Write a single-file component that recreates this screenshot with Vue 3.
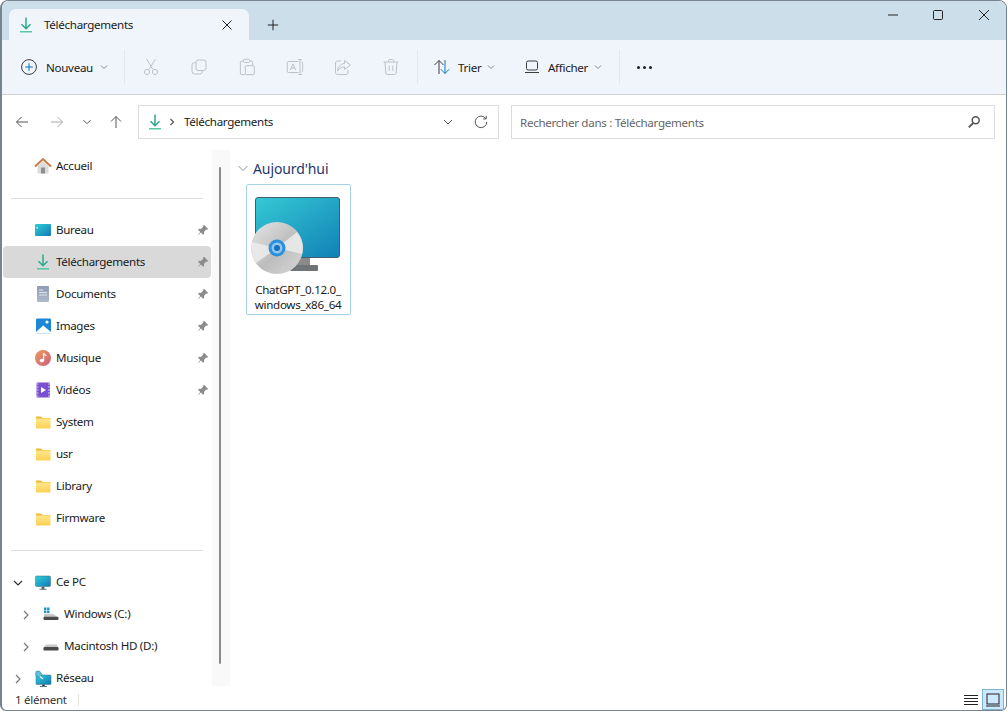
<script setup>
const pinned = [
  { name: 'Bureau', icon: 'i-desk', pin: true },
  { name: 'Téléchargements', icon: 'i-dl', pin: true, selected: true },
  { name: 'Documents', icon: 'i-doc', pin: true },
  { name: 'Images', icon: 'i-img', pin: true },
  { name: 'Musique', icon: 'i-music', pin: true },
  { name: 'Vidéos', icon: 'i-video', pin: true },
  { name: 'System', icon: 'i-folder' },
  { name: 'usr', icon: 'i-folder' },
  { name: 'Library', icon: 'i-folder' },
  { name: 'Firmware', icon: 'i-folder' },
]
const disabledTools = ['t-cut', 't-copy', 't-paste', 't-rename', 't-share', 't-trash']
</script>

<template>
  <div class="window">
    <svg class="defs" aria-hidden="true">
      <defs>
        <linearGradient id="g-screen" x1="0" y1="0" x2="1" y2="1">
          <stop offset="0" stop-color="#2fd0d8" />
          <stop offset="1" stop-color="#1178b4" />
        </linearGradient>
        <linearGradient id="g-big" x1="0" y1="0" x2="0.9" y2="1">
          <stop offset="0" stop-color="#35c9d4" />
          <stop offset="1" stop-color="#1384b8" />
        </linearGradient>
        <linearGradient id="g-folder" x1="0" y1="0" x2="0" y2="1">
          <stop offset="0" stop-color="#ffe88a" />
          <stop offset="1" stop-color="#fbcf52" />
        </linearGradient>
        <linearGradient id="g-music" x1="0" y1="0" x2="1" y2="1">
          <stop offset="0" stop-color="#ee9a5c" />
          <stop offset="1" stop-color="#c9607f" />
        </linearGradient>
        <linearGradient id="g-doc" x1="0" y1="0" x2="0" y2="1">
          <stop offset="0" stop-color="#8e9db5" />
          <stop offset="1" stop-color="#aebacb" />
        </linearGradient>
        <linearGradient id="g-disc" x1="0" y1="0" x2="1" y2="1">
          <stop offset="0" stop-color="#e6e6e6" />
          <stop offset="0.55" stop-color="#bdbdbd" />
          <stop offset="1" stop-color="#d8d8d8" />
        </linearGradient>
      </defs>
      <symbol id="i-dl" viewBox="0 0 18 18">
        <path d="M9 1.5V12.5M4.5 8.2 9 12.7l4.5-4.5" fill="none" stroke="#2ba88c" stroke-width="1.5" />
        <path d="M3 15.8h12" stroke="#58c9a6" stroke-width="1.6" />
      </symbol>
      <symbol id="i-desk" viewBox="0 0 18 18">
        <rect x="1" y="3" width="16" height="12" rx="1" fill="url(#g-screen)" />
        <rect x="2.5" y="6" width="1.5" height="1.5" fill="#d6f6fa" />
      </symbol>
      <symbol id="i-doc" viewBox="0 0 18 18">
        <rect x="3" y="1" width="12" height="16" rx="1" fill="url(#g-doc)" />
        <path d="M5 5h4M5 7.5h8M5 10h8" stroke="#e8edf3" stroke-width="0.9" />
      </symbol>
      <symbol id="i-img" viewBox="0 0 18 18">
        <rect x="2" y="1.5" width="15" height="15" rx="1.2" fill="#1b87d6" />
        <circle cx="13" cy="5" r="1.6" fill="#fff" />
        <path d="M2 15 9.2 8.5 17 15v1.5H2z" fill="#fff" />
      </symbol>
      <symbol id="i-music" viewBox="0 0 18 18">
        <circle cx="9" cy="9" r="8" fill="url(#g-music)" />
        <path d="M9.6 4v7" stroke="#fff" stroke-width="1.3" />
        <path d="M9.6 4.2c1 1.6 2.4 1.4 2.8 3" fill="none" stroke="#fff" stroke-width="1.1" />
        <ellipse cx="7.9" cy="11.6" rx="2.2" ry="1.8" fill="#fff" />
      </symbol>
      <symbol id="i-video" viewBox="0 0 18 18">
        <rect x="2.5" y="1.5" width="13.5" height="15" rx="1" fill="#7a4fd0" />
        <path d="M2.5 3h2M2.5 6h2M2.5 9h2M2.5 12h2M2.5 15h2M14 3h2M14 6h2M14 9h2M14 12h2M14 15h2" stroke="#d9c9f5" stroke-width="1" />
        <path d="M7 6 12 9 7 12z" fill="#fff" />
      </symbol>
      <symbol id="i-folder" viewBox="0 0 18 18">
        <path d="M2 3.5h5l1.6 1.6H16.5V7H2z" fill="#f0b93c" />
        <rect x="2" y="5.6" width="14.5" height="10" rx="0.8" fill="url(#g-folder)" />
      </symbol>
      <symbol id="i-home" viewBox="0 0 18 18">
        <path d="M3.5 9V16.5H14.5V9L9 4z" fill="#dcdcdc" />
        <rect x="7" y="10.5" width="4" height="6" fill="#8f8f8f" />
        <path d="M1 9.5 9 2l8 7.5" fill="none" stroke="#c97b45" stroke-width="2" />
      </symbol>
      <symbol id="i-pc" viewBox="0 0 18 18">
        <rect x="1.5" y="2" width="15" height="10.5" rx="1" fill="url(#g-screen)" stroke="#3a6a80" stroke-width="0.5" />
        <path d="M8 13h2v1.8H8zM5.5 15.3h7" stroke="#5f7380" stroke-width="1" />
      </symbol>
      <symbol id="i-winhd" viewBox="0 0 18 18">
        <path d="M2 1.5h2.4v2.4H2zM5.1 1.5h2.4v2.4H5.1zM2 4.6h2.4V7H2zM5.1 4.6h2.4V7H5.1z" fill="#1e93c4" />
        <path d="M2 7.8h9l4 3v1H2z" fill="#c8c8c8" />
        <rect x="1.5" y="10.8" width="15" height="3.2" rx="1" fill="#4a4a4a" />
      </symbol>
      <symbol id="i-hd" viewBox="0 0 18 18">
        <path d="M4 6.5h10.5l2 3h-15z" fill="#c8c8c8" />
        <rect x="1.5" y="9" width="15" height="3.6" rx="1.2" fill="#4a4a4a" />
      </symbol>
      <symbol id="i-net" viewBox="0 0 18 18">
        <rect x="2" y="5" width="15" height="9.5" rx="1" fill="url(#g-screen)" stroke="#3a6a80" stroke-width="0.5" />
        <path d="M8.5 14.8h2v1.4h-2zM6 16.5h7" stroke="#5f7380" stroke-width="1" />
        <path d="M2 1.5 5.5 1l2.5 3.5-3 3L1.5 5z" fill="#5fc0d8" stroke="#2f7f9e" stroke-width="0.6" />
        <path d="M6 6.5 9 9" stroke="#e8f4f8" stroke-width="1.1" />
      </symbol>
      <symbol id="i-pin" viewBox="0 0 12 12">
        <path d="M7 .8 11.2 5l-1 .8-1-.2-2.3 2.3.2 2-.9.9-2.3-2.4L1.2 11 1 10.8l2.3-2.8-2.3-2.3.9-.9 2 .2L6.2 2.8 6 1.8z" fill="#8b8b8b" />
      </symbol>
      <symbol id="t-cut" viewBox="0 0 18 18">
        <path d="M4.5 1 11 11.5M13.5 1 7 11.5" />
        <circle cx="5" cy="14" r="2.6" />
        <circle cx="13" cy="14" r="2.6" />
      </symbol>
      <symbol id="t-copy" viewBox="0 0 18 18">
        <rect x="6" y="2" width="10" height="10.5" rx="2.2" />
        <path d="M6 4.8H4.2A2.2 2.2 0 0 0 2 7v6.3a2.7 2.7 0 0 0 2.7 2.7H10a2.2 2.2 0 0 0 2.2-2v-1.5" />
      </symbol>
      <symbol id="t-paste" viewBox="0 0 18 18">
        <path d="M5.5 3H4a1.7 1.7 0 0 0-1.7 1.7V15A1.7 1.7 0 0 0 4 16.7h2.8M11.5 3H13a1.7 1.7 0 0 1 1.7 1.7V7" />
        <rect x="5.5" y="1.3" width="6" height="3.2" rx="1" />
        <rect x="7.3" y="7.7" width="9" height="9" rx="1" />
      </symbol>
      <symbol id="t-rename" viewBox="0 0 18 18">
        <path d="M12.5 3.5H2.5A1.2 1.2 0 0 0 1.3 4.7v8.6a1.2 1.2 0 0 0 1.2 1.2h10M14 1.5v15M12.2 1.5h3.6M12.2 16.5h3.6M15.5 4a1.2 1.2 0 0 1 1.2 1.2v7.6a1.2 1.2 0 0 1-1.2 1.2" />
        <path d="M4.3 12 7 6l2.7 6M5.2 10h3.6" />
      </symbol>
      <symbol id="t-share" viewBox="0 0 18 18">
        <path d="M10.5 2.5 16.5 7l-6 4.5V9C7 9 5 10.5 3.5 13c.3-4 2.7-7 7-7.5z" />
        <path d="M7 3H3.5A2 2 0 0 0 1.5 5v9.5a2 2 0 0 0 2 2H12a2 2 0 0 0 2-2V12" />
      </symbol>
      <symbol id="t-trash" viewBox="0 0 18 18">
        <path d="M1.5 4h15M6.5 4V2.6A1.1 1.1 0 0 1 7.6 1.5h2.8a1.1 1.1 0 0 1 1.1 1.1V4M3 4l.8 11a1.7 1.7 0 0 0 1.7 1.5h7a1.7 1.7 0 0 0 1.7-1.5L15 4M7.2 7.5v5.5M10.8 7.5v5.5" />
      </symbol>
    </svg>

    <header class="titlebar">
      <div class="tab">
        <svg class="ic18"><use href="#i-dl" /></svg>
        <span class="tab-label">Téléchargements</span>
        <svg class="ic12 tab-x" viewBox="0 0 12 12"><path class="ln" d="M1.5 1.5l9 9M10.5 1.5l-9 9" /></svg>
      </div>
      <svg class="ic12 tab-plus" viewBox="0 0 12 12"><path class="ln" d="M6 .8v10.4M.8 6h10.4" /></svg>
      <div class="win-btns">
        <span class="win-btn"><svg class="ic12" viewBox="0 0 12 12"><path class="ln" d="M1 6h10" /></svg></span>
        <span class="win-btn"><svg class="ic12" viewBox="0 0 12 12"><rect class="ln" x="1.5" y="1.5" width="9" height="9" rx="1" /></svg></span>
        <span class="win-btn"><svg class="ic12" viewBox="0 0 12 12"><path class="ln" d="M1 1l10 10M11 1L1 11" /></svg></span>
      </div>
    </header>

    <div class="toolbar">
      <div class="tool-new">
        <svg class="ic18" viewBox="0 0 18 18">
          <circle cx="9" cy="9" r="7.4" fill="none" stroke="#3c3c3c" stroke-width="1" />
          <path d="M9 5.2v7.6M5.2 9h7.6" stroke="#0a6fb8" stroke-width="1" />
        </svg>
        <span>Nouveau</span>
        <svg class="chev" viewBox="0 0 8 8"><path d="M1 2.5 4 5.5 7 2.5" /></svg>
      </div>
      <i class="tool-sep"></i>
      <div class="tool-icons">
        <span v-for="t in disabledTools" :key="t" class="tool-icon">
          <svg class="ic18 off"><use :href="'#' + t" /></svg>
        </span>
      </div>
      <i class="tool-sep sep2"></i>
      <div class="tool-sort">
        <svg class="ic18" viewBox="0 0 18 18">
          <path d="M6 16V2.5M1.5 7 6 2.5 10.5 7" fill="none" stroke="#3c3c3c" stroke-width="1" />
          <path d="M12 2v13.5M7.8 11.2 12 15.5l4.2-4.3" fill="none" stroke="#0a78c4" stroke-width="1" />
        </svg>
        <span>Trier</span>
        <svg class="chev" viewBox="0 0 8 8"><path d="M1 2.5 4 5.5 7 2.5" /></svg>
      </div>
      <div class="tool-view">
        <svg class="ic18" viewBox="0 0 18 18">
          <rect x="3.5" y="3" width="11" height="9" rx="1.6" fill="none" stroke="#3c3c3c" stroke-width="1" />
          <path d="M2 14.5h14" stroke="#3c3c3c" stroke-width="1" />
        </svg>
        <span>Afficher</span>
        <svg class="chev" viewBox="0 0 8 8"><path d="M1 2.5 4 5.5 7 2.5" /></svg>
      </div>
      <i class="tool-sep"></i>
      <div class="dots"><i></i><i></i><i></i></div>
    </div>

    <div class="addr-row">
      <div class="nav">
        <svg class="ic14 nav-back" viewBox="0 0 14 14"><path class="nv" d="M13 7H1.5M6.5 2 1.5 7l5 5" /></svg>
        <svg class="ic14 nav-fwd" viewBox="0 0 14 14"><path class="nv light" d="M1 7h11.5M7.5 2l5 5-5 5" /></svg>
        <svg class="nav-down" viewBox="0 0 10 10"><path class="nv" d="M1.5 3.2 5 6.7l3.5-3.5" /></svg>
        <svg class="ic14 nav-up" viewBox="0 0 14 14"><path class="nv" d="M7 13V1.5M2 6.5l5-5 5 5" /></svg>
      </div>
      <div class="addr">
        <svg class="ic18"><use href="#i-dl" /></svg>
        <svg class="crumb" viewBox="0 0 6 8"><path d="M1.5 1 4.5 4 1.5 7" /></svg>
        <span class="addr-text">Téléchargements</span>
        <svg class="addr-chev" viewBox="0 0 10 10"><path class="nv" d="M1 3 5 7l4-4" /></svg>
        <svg class="addr-ref" viewBox="0 0 14 14"><path class="nv" d="M11.8 3.6A5.8 5.8 0 1 0 12.8 7M12.2 .8v3.1H9.1" /></svg>
      </div>
      <div class="search">
        <span>Rechercher dans : Téléchargements</span>
        <svg viewBox="0 0 14 14" class="search-ic"><circle cx="8.7" cy="5.3" r="3.5" fill="none" stroke="#555" stroke-width="1.5" /><path d="M6.2 8 1.8 12.4" stroke="#555" stroke-width="1.8" /></svg>
      </div>
    </div>

    <div class="main">
      <aside class="side">
        <div class="row"><svg class="ic18"><use href="#i-home" /></svg><span>Accueil</span></div>
        <div class="divider"></div>
        <div v-for="item in pinned" :key="item.name" class="row" :class="{ selected: item.selected }">
          <svg class="ic18"><use :href="'#' + item.icon" /></svg>
          <span>{{ item.name }}</span>
          <svg v-if="item.pin" class="pin"><use href="#i-pin" /></svg>
        </div>
        <div class="divider"></div>
        <div class="row tree">
          <svg class="tw open" viewBox="0 0 10 10"><path d="M1 3 5 7l4-4" /></svg>
          <svg class="ic18"><use href="#i-pc" /></svg><span>Ce PC</span>
        </div>
        <div class="row tree sub">
          <svg class="tw" viewBox="0 0 10 10"><path d="M3 1l4 4-4 4" /></svg>
          <svg class="ic18"><use href="#i-winhd" /></svg><span>Windows (C:)</span>
        </div>
        <div class="row tree sub">
          <svg class="tw" viewBox="0 0 10 10"><path d="M3 1l4 4-4 4" /></svg>
          <svg class="ic18"><use href="#i-hd" /></svg><span>Macintosh HD (D:)</span>
        </div>
        <div class="row tree">
          <svg class="tw" viewBox="0 0 10 10"><path d="M3 1l4 4-4 4" /></svg>
          <svg class="ic18"><use href="#i-net" /></svg><span>Réseau</span>
        </div>
      </aside>
      <div class="track"><div class="thumb"></div></div>
      <section class="content">
        <div class="group">
          <svg viewBox="0 0 10 10"><path d="M.5 3 5 7.5 9.5 3" /></svg>
          <span>Aujourd'hui</span>
        </div>
        <div class="tile">
          <svg class="setup" viewBox="0 0 90 82">
            <rect x="5.5" y="0.5" width="84" height="60" rx="2.5" fill="url(#g-big)" stroke="#3d5f70" stroke-width="1" />
            <rect x="44" y="61" width="16" height="7" fill="#8a8a8a" />
            <rect x="40" y="68" width="28" height="6" rx="1" fill="#6f7478" />
            <circle cx="27" cy="51" r="26" fill="url(#g-disc)" />
            <path d="M27 51 47 35A26 26 0 0 1 52 57zM27 51 6 66A26 26 0 0 1 2 45z" fill="#ececec" opacity="0.85" />
            <circle cx="27" cy="51" r="8.5" fill="#2c8fdc" />
            <circle cx="27" cy="51" r="5.5" fill="#8ec6ee" />
            <circle cx="27" cy="51" r="3" fill="#1a6fc2" />
          </svg>
          <div class="tile-name">ChatGPT_0.12.0_<br />windows_x86_64</div>
        </div>
      </section>
    </div>

    <footer class="status">
      <span>1 élément</span>
      <i class="status-sep"></i>
      <div class="views">
        <svg class="view-list" viewBox="0 0 14 12"><path d="M0 1.5h14M0 4.5h14M0 7.5h14M0 10.5h14" stroke="#222" stroke-width="1" /></svg>
        <span class="view-tile"><svg viewBox="0 0 14 14"><rect x="1" y="1" width="12" height="10" fill="none" stroke="#222" /><path d="M0 13h14" stroke="#222" /></svg></span>
      </div>
    </footer>
  </div>
</template>

<style>
html, body { margin: 0; background: #fff; }
</style>

<style scoped>
.window {
  box-sizing: border-box;
  width: 1007px;
  height: 711px;
  display: flex;
  flex-direction: column;
  background: #fff;
  border: 1px solid #77838d;
  border-left-width: 2px;
  border-radius: 8px 8px 6px 6px;
  overflow: hidden;
  font-family: "Noto Sans", "Open Sans", sans-serif;
  font-size: 11.6px;
  letter-spacing: -0.3px;
  color: #1a1a1a;
}
.defs { width: 0; height: 0; display: block; overflow: hidden; }
.ic18 { width: 18px; height: 18px; flex: none; }
.ic14 { width: 14px; height: 14px; flex: none; }
.ic12 { width: 12px; height: 12px; flex: none; }
.ln { fill: none; stroke: #222; stroke-width: 1; }
.nv { fill: none; stroke: #555; stroke-width: 1; }
.nv.light { stroke: #a9a9a9; }

.titlebar {
  height: 39px;
  flex: none;
  display: flex;
  align-items: flex-end;
  background: #cddeeb;
}
.tab {
  box-sizing: border-box;
  width: 240px;
  height: 31px;
  margin-left: 7px;
  padding: 0 16px 0 8px;
  display: flex;
  align-items: center;
  gap: 9px;
  background: #f0f5fb;
  border-radius: 7px 7px 0 0;
}
.tab-label { flex: 1; }
.tab-plus { margin: 0 0 9px 18px; }
.win-btns {
  margin-left: auto;
  align-self: flex-start;
  display: flex;
  margin-right: -0.5px;
}
.win-btn {
  width: 45.5px;
  height: 28px;
  display: flex;
  align-items: center;
  justify-content: center;
}

.toolbar {
  box-sizing: border-box;
  height: 55px;
  flex: none;
  display: flex;
  align-items: center;
  padding-left: 18px;
  background: #f0f5fb;
  border-bottom: 1px solid #d0d3d6;
}
.tool-new { display: flex; align-items: center; gap: 8px; width: 104px; }
.tool-new .chev { margin-left: -1px; }
.chev { width: 8px; height: 8px; flex: none; }
.chev path { fill: none; stroke: #8a8a8a; stroke-width: 1; }
.tool-sep { width: 1px; height: 34px; background: #e3e7eb; flex: none; }
.tool-icons { display: flex; margin-left: 2px; }
.tool-icon { width: 48px; display: flex; justify-content: center; }
.off { fill: none; stroke: #b9c2c8; stroke-width: 1; }
.sep2 { margin-left: 2px; }
.tool-sort { display: flex; align-items: center; gap: 7px; margin-left: 15px; width: 75px; }
.tool-sort .chev { margin-left: -1px; }
.tool-view { display: flex; align-items: center; gap: 7px; margin-left: 15px; width: 96px; }
.tool-view .chev { margin-left: -1px; }
.dots { display: flex; gap: 3px; margin-left: 17px; }
.dots i { width: 3px; height: 3px; background: #222; border-radius: 50%; }

.addr-row {
  box-sizing: border-box;
  height: 55px;
  flex: none;
  display: flex;
  align-items: flex-start;
  padding-top: 10px;
}
.nav { width: 136px; height: 34px; display: flex; align-items: center; flex: none; }
.nav-back { margin-left: 13px; }
.nav-fwd { margin-left: 21px; }
.nav-down { width: 10px; height: 10px; margin-left: 18px; }
.nav-up { margin-left: 17px; }
.addr, .search {
  box-sizing: border-box;
  height: 34px;
  display: flex;
  align-items: center;
  border: 1px solid #dcdcdc;
  background: #fff;
}
.addr { width: 361px; padding-left: 7px; }
.crumb { width: 6px; height: 8px; margin: 0 9px 0 5px; flex: none; }
.crumb path { fill: none; stroke: #555; stroke-width: 1.2; }
.addr-text { flex: 1; padding-bottom: 1px; }
.addr-chev { width: 10px; height: 10px; flex: none; }
.addr-ref { width: 14px; height: 14px; flex: none; margin: 0 10px 0 21px; }
.search {
  width: 484px;
  margin-left: 12px;
  padding: 0 13px 0 8px;
  justify-content: space-between;
  color: #666;
}
.search-ic { width: 14px; height: 14px; flex: none; }

.main { flex: 1; min-height: 0; display: flex; }
.side { width: 210px; flex: none; padding: 0 1px 0 1px; box-sizing: border-box; overflow: hidden; }
.row {
  height: 32.06px;
  display: flex;
  align-items: center;
  gap: 4px;
  padding-left: 31px;
  box-sizing: border-box;
  border-radius: 4px;
}
.row span { padding-bottom: 2px; }
.row.selected { background: #d9d9d9; }
.pin { width: 12px; height: 12px; margin-left: auto; margin-right: 2px; }
.divider { height: 32.06px; display: flex; align-items: center; }
.divider::before { content: ""; display: block; height: 1px; background: #dcdcdc; width: 192px; margin-left: 8px; }
.tree { padding-left: 10px; }
.tree .tw { width: 10px; height: 10px; margin-right: 7px; flex: none; }
.tree .tw path { fill: none; stroke: #777; stroke-width: 1.2; }
.tree .tw.open path { stroke: #333; }
.tree.sub { padding-left: 18px; }
.track {
  width: 18px;
  flex: none;
  background: #f9f9f9;
  margin-bottom: 3px;
  position: relative;
}
.thumb {
  position: absolute;
  left: 7px;
  top: 17px;
  bottom: 22px;
  width: 2px;
  background: #8a8a8a;
  border-radius: 1px;
}
.content { flex: 1; padding: 8px 0 0 8px; }
.group { display: flex; align-items: center; gap: 5px; height: 20px; color: #26386f; font-size: 14px; letter-spacing: -0.1px; }
.group svg { width: 10px; height: 10px; }
.group path { fill: none; stroke: #7d8595; stroke-width: 0.9; }
.tile {
  box-sizing: border-box;
  width: 105px;
  height: 131px;
  margin: 6px 0 0 8px;
  border: 1px solid #a6d3ea;
  border-radius: 2px;
  display: flex;
  flex-direction: column;
  align-items: center;
}
.setup { width: 90px; height: 82px; margin: 12px 0 0 -7px; flex: none; }
.tile-name { margin: 3px 1px 0 0; text-align: center; line-height: 15px; white-space: nowrap; }

.status {
  height: 21px;
  flex: none;
  display: flex;
  align-items: center;
  padding-left: 13px;
  color: #333;
}
.status-sep { width: 1px; height: 12px; background: #e3e3e3; margin-left: 11px; }
.views { margin-left: auto; display: flex; align-items: center; gap: 4px; margin-right: 2px; }
.view-list { width: 14px; height: 12px; }
.view-tile {
  box-sizing: border-box;
  width: 22px;
  height: 21px;
  background: #cce8ff;
  border: 1px solid #7fb4d0;
  display: flex;
  align-items: center;
  justify-content: center;
}
.view-tile svg { width: 14px; height: 14px; }
</style>
